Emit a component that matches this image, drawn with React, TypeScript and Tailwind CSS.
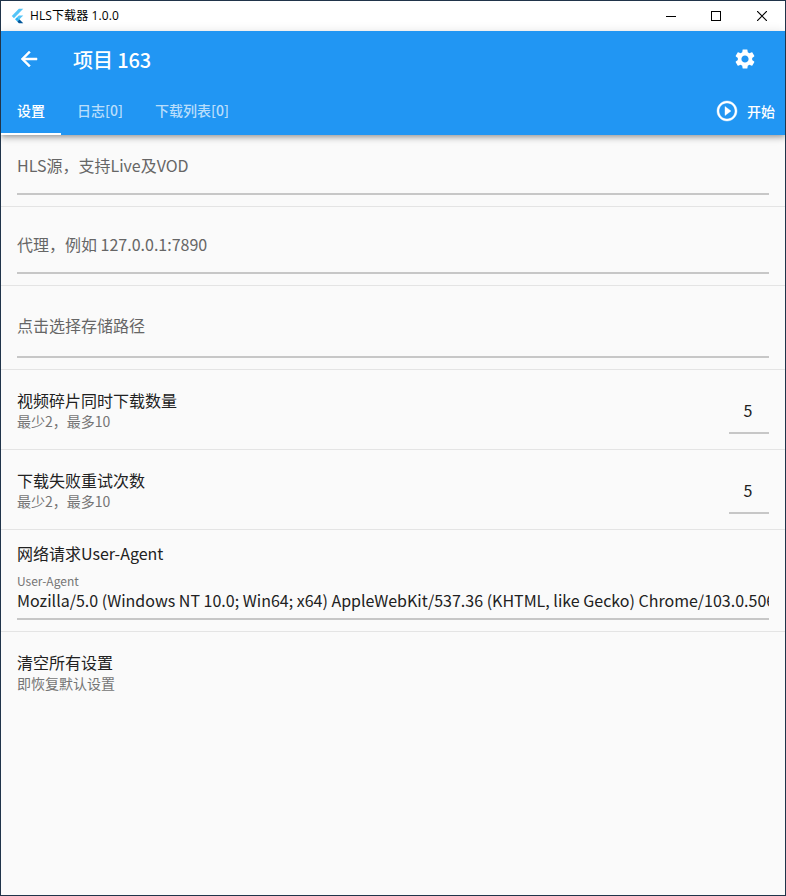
import type { ReactNode } from "react";

function FlutterLogo() {
  return (
    <svg className="mb-px h-4 w-[13px]" viewBox="0 0 166 202" preserveAspectRatio="none">
      <path fill="#54c5f8" d="M37.7 128.9 9.8 101 100.4 10.4h55.8z" />
      <path fill="#54c5f8" d="M156.2 94h-55.8L79.5 114.9l27.9 27.9z" />
      <path fill="#01579b" d="m79.5 170.7 20.9 20.9h55.8l-48.8-48.8z" />
      <path fill="#29b6f6" d="m51.7 142.8 27.8-27.9 27.9 27.9-27.9 27.9z" />
    </svg>
  );
}

function TitleBar() {
  return (
    <div className="flex h-[30px] items-center bg-white pl-[10px]">
      <FlutterLogo />
      <span className="ml-1.5 flex-1 font-['Open_Sans','Noto_Sans_CJK_SC',sans-serif] text-[12px] leading-4 tracking-[0.1px] text-black">
        HLS下载器 1.0.0
      </span>
      <div className="flex text-black">
        <div className="flex w-[46px] items-center justify-center pl-0.5">
          <svg width="10" height="10" shapeRendering="crispEdges"><path d="M0 5.5h10" stroke="currentColor" /></svg>
        </div>
        <div className="flex w-[46px] items-center justify-center">
          <svg width="10" height="10" shapeRendering="crispEdges"><path d="M.5 .5h9v9h-9z" fill="none" stroke="currentColor" /></svg>
        </div>
        <div className="flex w-[46px] items-center justify-center">
          <svg width="10" height="10"><path d="M0 0l10 10M10 0l-10 10" stroke="currentColor" strokeWidth="1.2" /></svg>
        </div>
      </div>
    </div>
  );
}

function AppBar() {
  return (
    <header className="relative h-[104px] shrink-0 bg-[#2196f3] text-white shadow-[0_2px_4px_-1px_rgba(0,0,0,0.2),0_4px_5px_0_rgba(0,0,0,0.14),0_1px_10px_0_rgba(0,0,0,0.12)]">
      <div className="flex h-14 items-center pl-4 pr-7">
        <svg className="size-6" viewBox="0 0 24 24" fill="currentColor" stroke="currentColor" strokeWidth="0.5">
          <path d="M20 11H7.83l5.59-5.59L12 4l-8 8 8 8 1.41-1.41L7.83 13H20v-2z" />
        </svg>
        <h1 className="ml-8 flex-1 pt-0.5 text-xl font-medium leading-7 tracking-[-0.1px]">项目 163</h1>
        <svg className="size-6" viewBox="0 0 24 24" fill="currentColor">
          <path d="M19.14 12.94c.04-.3.06-.61.06-.94 0-.32-.02-.64-.07-.94l2.03-1.58c.18-.14.23-.41.12-.61l-1.92-3.32c-.12-.22-.37-.29-.59-.22l-2.39.96c-.5-.38-1.03-.7-1.62-.94l-.36-2.54c-.04-.24-.24-.41-.48-.41h-3.84c-.24 0-.43.17-.47.41l-.36 2.54c-.59.24-1.13.57-1.62.94l-2.39-.96c-.22-.08-.47 0-.59.22L2.74 8.87c-.12.21-.08.47.12.61l2.03 1.58c-.05.3-.09.63-.09.94s.02.64.07.94l-2.03 1.58c-.18.14-.23.41-.12.61l1.92 3.32c.12.22.37.29.59.22l2.39-.96c.5.38 1.03.7 1.62.94l.36 2.54c.05.24.24.41.48.41h3.84c.24 0 .44-.17.47-.41l.36-2.54c.59-.24 1.13-.56 1.62-.94l2.39.96c.22.08.47 0 .59-.22l1.92-3.32c.12-.22.07-.47-.12-.61l-2.01-1.58zM12 15.6c-1.98 0-3.6-1.62-3.6-3.6s1.62-3.6 3.6-3.6 3.6 1.62 3.6 3.6-1.62 3.6-3.6 3.6z" />
        </svg>
      </div>
      <div className="flex h-12 text-sm font-medium">
        <div className="flex items-center border-b-2 border-white px-4">设置</div>
        <div className="flex items-center px-4 pb-0.5 text-white/70">日志[0]</div>
        <div className="flex items-center px-4 pb-0.5 text-white/70">下载列表[0]</div>
        <div className="ml-auto flex items-center pr-[10px]">
          <svg className="mr-2 size-6" viewBox="0 0 24 24" fill="currentColor" stroke="currentColor" strokeWidth="0.4">
            <path d="M10 16.5l6-4.5-6-4.5v9zM12 2C6.480 2 2 6.480 2 12s4.480 10 10 10 10-4.480 10-10S17.520 2 12 2zm0 18c-4.410 0-8-3.590-8-8s3.590-8 8-8 8 3.590 8 8-3.590 8-8 8z" />
          </svg>
          <span>开始</span>
        </div>
      </div>
    </header>
  );
}

function Hint({ className, children }: { className: string; children: ReactNode }) {
  return (
    <div className={`border-b border-[#e4e4e4] px-4 pb-[11px] ${className}`}>
      <div className="flex h-full flex-col justify-end border-b-2 border-[#c7c7c7] text-base leading-6 text-[#666]">
        {children}
      </div>
    </div>
  );
}

function Heading({ title, note }: { title: string; note: string }) {
  return (
    <div>
      <div className="text-base leading-6 text-[#212121]">{title}</div>
      <div className="text-sm leading-[18px] text-[#757575]">{note}</div>
    </div>
  );
}

function NumberRow({ title }: { title: string }) {
  return (
    <div className="flex h-20 justify-between border-b border-[#e4e4e4] px-4 pt-[18px]">
      <Heading title={title} note="最少2，最多10" />
      <div className="h-[46px] w-10 border-b-2 border-[#c7c7c7] pt-[10px] pr-[2px] text-center text-base leading-6 text-[#212121]">
        5
      </div>
    </div>
  );
}

export default function App() {
  return (
    <div className="flex h-[896px] w-[786px] flex-col overflow-hidden border border-[#20344a] bg-[#fafafa] font-['Noto_Sans_CJK_SC',sans-serif]">
      <TitleBar />
      <AppBar />
      <main>
        <Hint className="h-[72px]"><span className="pb-4">HLS源，支持Live及VOD</span></Hint>
        <Hint className="h-[79px]"><span className="pb-4">代理，例如 127.0.0.1:7890</span></Hint>
        <Hint className="h-[84px]"><span className="pb-[19px]">点击选择存储路径</span></Hint>
        <NumberRow title="视频碎片同时下载数量" />
        <NumberRow title="下载失败重试次数" />
        <div className="h-[102px] border-b border-[#e4e4e4] px-4 pt-[11px] text-base leading-6 text-[#212121]">
          <div>网络请求User-Agent</div>
          <div className="pt-2 text-xs leading-[15px] text-[#757575]">User-Agent</div>
          <div className="h-[32px] overflow-hidden whitespace-nowrap border-b-2 border-[#c7c7c7]">
            Mozilla/5.0 (Windows NT 10.0; Win64; x64) AppleWebKit/537.36 (KHTML, like Gecko) Chrome/103.0.506
          </div>
        </div>
        <div className="px-4 pt-[18px]">
          <Heading title="清空所有设置" note="即恢复默认设置" />
        </div>
      </main>
    </div>
  );
}
